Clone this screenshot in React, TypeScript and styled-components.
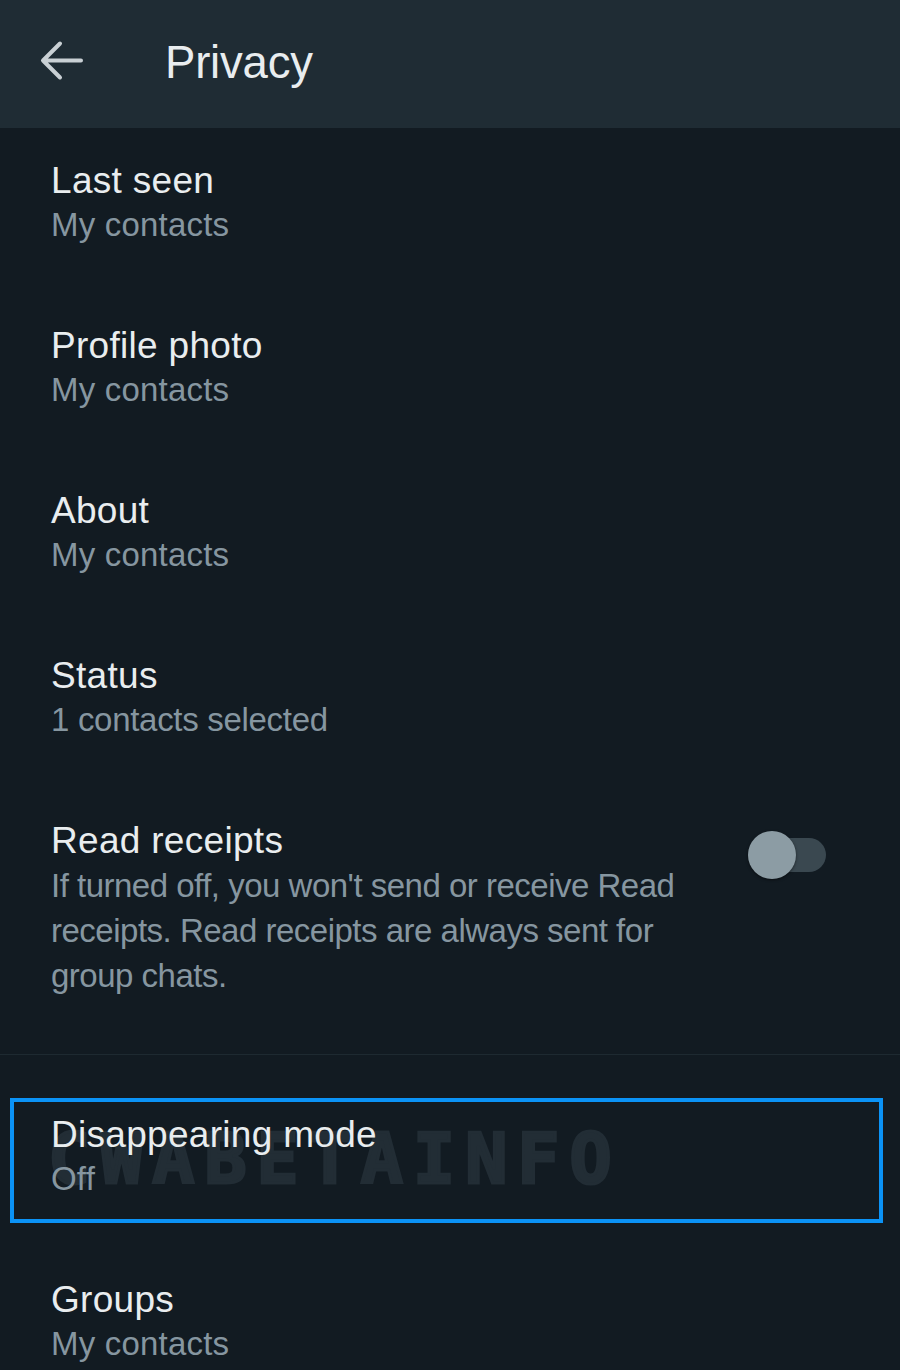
import React from "react";
import styled, { createGlobalStyle } from "styled-components";

const Global = createGlobalStyle`
  html, body { margin: 0; padding: 0; background: #121b22; }
  body { font-family: "Liberation Sans", Arial, sans-serif; }
`;

const Page = styled.div`
  width: 900px;
  height: 1370px;
  overflow: hidden;
  background: #121b22;
  display: flex;
  flex-direction: column;
`;

const Header = styled.header`
  height: 128px;
  flex: 0 0 128px;
  background: #1f2c34;
  display: flex;
  align-items: center;
  padding-left: 38px;
  box-sizing: border-box;
`;

const BackButton = styled.div`
  width: 46px;
  height: 46px;
  display: flex;
  align-items: center;
  justify-content: center;
  margin-right: 81px;
  margin-top: -6px;
`;

const Title = styled.h1`
  margin: 0;
  margin-top: -3px;
  font-size: 45.5px;
  font-weight: 400;
  color: #e9edef;
  letter-spacing: -0.2px;
`;

const List = styled.div`
  display: flex;
  flex-direction: column;
`;

const Row = styled.div<{ $top?: number; $bottom?: number }>`
  position: relative;
  display: flex;
  align-items: flex-start;
  padding: ${(p) => p.$top ?? 31}px 0 ${(p) => p.$bottom ?? 45.5}px 51px;
`;

const TextCol = styled.div<{ $width?: number }>`
  display: flex;
  flex-direction: column;
  width: ${(p) => (p.$width ? `${p.$width}px` : "auto")};
  position: relative;
  z-index: 1;
`;

const ItemTitle = styled.div`
  font-size: 37px;
  line-height: 44px;
  color: #e9edef;
  letter-spacing: 0.3px;
`;

const ItemSub = styled.div<{ $tight?: boolean }>`
  font-size: 33px;
  line-height: 44.5px;
  color: #8696a0;
  letter-spacing: ${(p) => (p.$tight ? "-0.3px" : "0.2px")};
`;

const Desc = styled(ItemSub)`
  line-height: 45px;
  letter-spacing: -0.5px;
`;

const Switch = styled.div`
  position: relative;
  flex: 0 0 78px;
  height: 34px;
  margin-left: 20px;
  margin-top: 19px;
  border-radius: 17px;
  background: #3a4850;
`;

const Thumb = styled.div`
  position: absolute;
  left: 0;
  top: -7px;
  width: 48px;
  height: 48px;
  border-radius: 50%;
  background: #8c9ca4;
  box-shadow: 0 1px 3px rgba(0, 0, 0, 0.5);
`;

const Divider = styled.div`
  height: 1px;
  background: #1e2a31;
`;

const Highlight = styled.div`
  position: absolute;
  left: 10px;
  width: 873px;
  top: 43px;
  height: 125px;
  box-sizing: border-box;
  border: 4px solid #0b93f6;
  z-index: 2;
  pointer-events: none;
`;

const Watermark = styled.div`
  position: absolute;
  left: 48px;
  top: 63px;
  font-family: "DejaVu Sans Mono", monospace;
  font-weight: 700;
  font-size: 70px;
  letter-spacing: 10px;
  color: #222d35;
  -webkit-text-stroke: 3px #222d35;
  z-index: 0;
  white-space: nowrap;
`;

const BackArrow = () => (
  <svg width="46" height="46" viewBox="0 0 46 46" fill="none">
    <path
      d="M43 22.5H6M22 5.5L5 22.5l17 17"
      stroke="#c9d0d4"
      strokeWidth="4"
      strokeLinecap="round"
      strokeLinejoin="round"
    />
  </svg>
);

type Item = { title: string; sub: string; tight?: boolean };

const items: Item[] = [
  { title: "Last seen", sub: "My contacts" },
  { title: "Profile photo", sub: "My contacts" },
  { title: "About", sub: "My contacts" },
  { title: "Status", sub: "1 contacts selected", tight: true },
];

export default function App() {
  return (
    <>
      <Global />
      <Page>
        <Header>
          <BackButton>
            <BackArrow />
          </BackButton>
          <Title>Privacy</Title>
        </Header>
        <List>
          {items.map((it) => (
            <Row key={it.title}>
              <TextCol>
                <ItemTitle>{it.title}</ItemTitle>
                <ItemSub $tight={it.tight}>{it.sub}</ItemSub>
              </TextCol>
            </Row>
          ))}
          <Row $bottom={56}>
            <TextCol $width={677}>
              <ItemTitle>Read receipts</ItemTitle>
              <Desc>
                If turned off, you won't send or receive Read receipts. Read
                receipts are always sent for group chats.
              </Desc>
            </TextCol>
            <Switch>
              <Thumb />
            </Switch>
          </Row>
          <Divider />
          <Row $top={58}>
            <Watermark>CWABETAINFO</Watermark>
            <TextCol>
              <ItemTitle>Disappearing mode</ItemTitle>
              <ItemSub>Off</ItemSub>
            </TextCol>
            <Highlight />
          </Row>
          <Row>
            <TextCol>
              <ItemTitle>Groups</ItemTitle>
              <ItemSub>My contacts</ItemSub>
            </TextCol>
          </Row>
        </List>
      </Page>
    </>
  );
}
